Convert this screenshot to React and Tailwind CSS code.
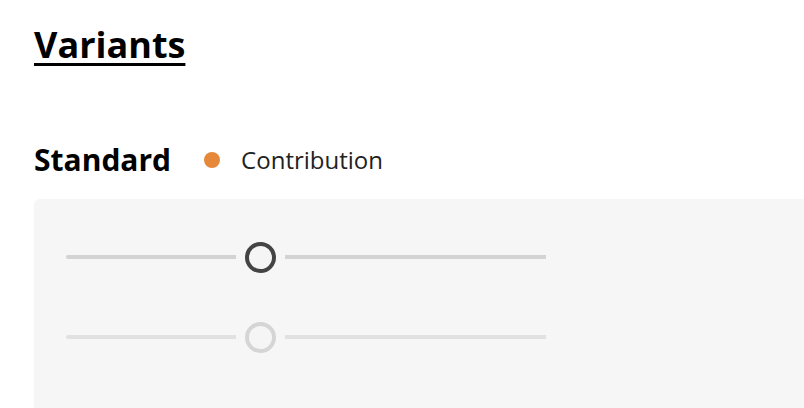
const FONT = { fontFamily: '"Open Sans", "Noto Sans", sans-serif' };

function Slider({ value, disabled }) {
  const track = disabled ? 'bg-[#e1e1e1]' : 'bg-[#d3d3d3]';
  const ring = disabled ? 'border-[#d5d5d5]' : 'border-[#444444]';
  return (
    <div className="flex h-[32px] w-[480px] items-center">
      <div className={`h-[4px] rounded-l-[2px] ${track}`} style={{ width: `${value}px` }} />
      <div className={`mx-[9px] h-[31px] w-[31px] shrink-0 rounded-full border-[4px] bg-[#f5f5f5] ${ring}`} />
      <div className={`h-[4px] flex-1 ${track}`} />
    </div>
  );
}

export default function App() {
  return (
    <div className="h-[408px] w-[804px] overflow-hidden bg-white pl-[34px] text-black" style={FONT}>
      <h1 className="pt-[23px] text-[36px] font-bold leading-[44px] underline decoration-[3px] underline-offset-[5px]">
        Variants
      </h1>
      <div className="mt-[75px] flex h-[36px] items-center">
        <h2 className="text-[30px] font-bold leading-[36px]">Standard</h2>
        <span className="ml-[33px] h-[16px] w-[16px] rounded-full bg-[#e6883a]" />
        <span className="ml-[21px] text-[24px] leading-[36px] text-[#222222]">Contribution</span>
      </div>
      <div className="mt-[21px] h-[260px] rounded-tl-[6px] bg-[#f6f6f6] pl-[32px] pt-[42px]">
        <div className="flex flex-col gap-[48px]">
          <Slider value={170} />
          <Slider value={170} disabled />
        </div>
      </div>
    </div>
  );
}
